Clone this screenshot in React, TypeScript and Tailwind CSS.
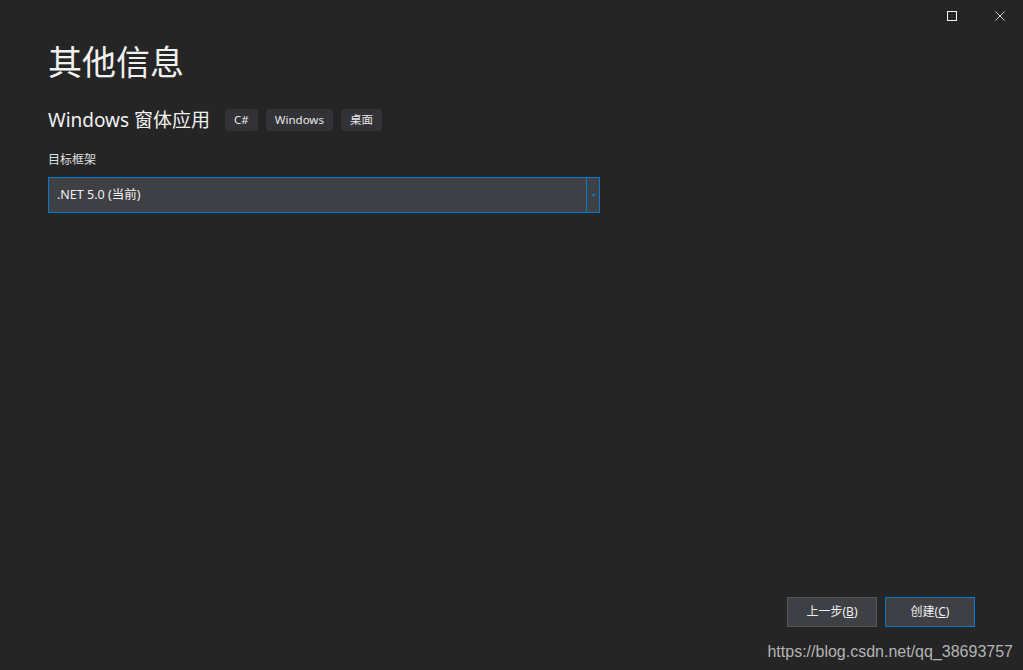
import React from 'react';

const font = "font-['Noto_Sans','Noto_Sans_CJK_SC',sans-serif]";

const Tag: React.FC<{ label: string }> = ({ label }) => (
	<span className="flex h-[22px] items-center rounded-[4px] bg-[#333337] px-[9px] text-[11.5px] text-[#e8e8e8]">
		{label}
	</span>
);

export default function App() {
	return (
		<div className={`flex h-[670px] w-[1023px] flex-col overflow-hidden bg-[#252526] text-[#f1f1f1] ${font}`}>
			{/* Window controls. */}
			<div className="flex h-[32px] items-start justify-end pr-[18px] pt-[11px]">
				<div className="mr-[38px] h-[10px] w-[10px] border border-[#f1f1f1]" />
				<svg width="10" height="10" viewBox="0 0 10 10" className="text-[#d0d0d0]">
					<path d="M0.5 0.5 L9.5 9.5 M9.5 0.5 L0.5 9.5" stroke="currentColor" strokeWidth="1" />
				</svg>
			</div>

			{/* Content. */}
			<div className="flex flex-1 flex-col px-[48px]">
				<h1 className="mt-[7px] text-[34px] leading-[46px] font-normal">其他信息</h1>
				<div className="mt-[21px] flex items-center gap-[8px]">
					<span className="mr-[7px] text-[19px] leading-[28px]">Windows 窗体应用</span>
					<Tag label="C#" />
					<Tag label="Windows" />
					<Tag label="桌面" />
				</div>
				<label className="mt-[18px] text-[12px] leading-[16px] text-[#e0e0e0]">目标框架</label>
				<div className="mt-[9px] flex h-[36px] w-[552px] border border-[#007acc] bg-[#3f3f46]">
					<div className="flex flex-1 items-center pl-[8px] text-[12.5px] text-[#f1f1f1]">.NET 5.0 (当前)</div>
					<div className="flex w-[13px] items-center justify-center border-l border-[#007acc]">
						<svg width="5" height="3" viewBox="0 0 5 3">
							<path d="M0 0 H5 L2.5 3 Z" fill="#007acc" />
						</svg>
					</div>
				</div>
			</div>

			{/* Footer buttons. */}
			<div className="flex justify-end gap-[8px] pr-[48px]">
				<button className="h-[30px] w-[90px] border border-[#555555] bg-[#3f3f46] text-[12px] text-[#f1f1f1]">
					上一步(<span className="underline">B</span>)
				</button>
				<button className="h-[30px] w-[90px] border border-[#007acc] bg-[#3f3f46] text-[12px] text-[#f1f1f1]">
					创建(<span className="underline">C</span>)
				</button>
			</div>
			<div className="flex h-[43px] items-center justify-end pr-[10px] pt-[6px] font-['Liberation_Sans',sans-serif] text-[16px] text-[#b4b4b4]">
				https://blog.csdn.net/qq_38693757
			</div>
		</div>
	);
}
